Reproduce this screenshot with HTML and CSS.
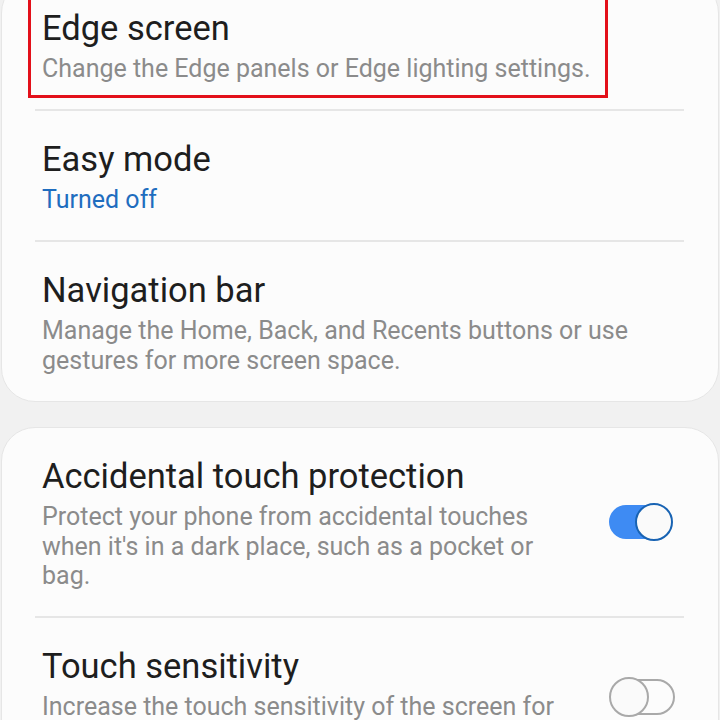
FILE: index.html
```html
<!DOCTYPE html>
<html>
<head>
<meta charset="utf-8">
<link rel="stylesheet" href="styles.css">
</head>
<body>
<div class="page">
  <section class="card card-first">
    <div class="row highlighted">
      <div class="text">
        <div class="title">Edge screen</div>
        <div class="desc">Change the Edge panels or Edge lighting settings.</div>
      </div>
    </div>
    <div class="divider"></div>
    <div class="row">
      <div class="text">
        <div class="title">Easy mode</div>
        <div class="desc status">Turned off</div>
      </div>
    </div>
    <div class="divider"></div>
    <div class="row">
      <div class="text">
        <div class="title">Navigation bar</div>
        <div class="desc">Manage the Home, Back, and Recents buttons or use<br>gestures for more screen space.</div>
      </div>
    </div>
  </section>
  <section class="card">
    <div class="row">
      <div class="text">
        <div class="title">Accidental touch protection</div>
        <div class="desc">Protect your phone from accidental touches<br>when it's in a dark place, such as a pocket or<br>bag.</div>
      </div>
      <div class="switch on"><span class="thumb"></span></div>
    </div>
    <div class="divider"></div>
    <div class="row">
      <div class="text">
        <div class="title">Touch sensitivity</div>
        <div class="desc">Increase the touch sensitivity of the screen for<br>use with screen protectors.</div>
      </div>
      <div class="switch off"><span class="thumb"></span></div>
    </div>
  </section>
</div>
</body>
</html>
```
FILE: styles.css
```css
html, body {
  margin: 0;
  padding: 0;
  background: #f1f1f1;
  font-family: Roboto, "Noto Sans", sans-serif;
  height: 720px;
  overflow: hidden;
}
.page {
  margin-top: -21px;
  padding: 0 1px;
  display: flex;
  flex-direction: column;
  gap: 25.5px;
}
.card {
  background: #fcfcfc;
  border: 1px solid #e6e6e6;
  border-radius: 34px;
}
.row {
  display: flex;
  align-items: center;
  padding: 31px 45px 25.5px 40px;
  position: relative;
}
.highlighted::after {
  content: "";
  position: absolute;
  left: 26px;
  right: 110px;
  top: 0;
  bottom: 11px;
  border: 3px solid #e3101a;
}
.text {
  flex: 1;
  white-space: nowrap;
}
.title {
  font-size: 34.5px;
  line-height: 34px;
  color: #1e1e1e;
  margin-bottom: 9px;
}
.desc {
  font-size: 25px;
  line-height: 29.5px;
  color: #8b8b8b;
}
.status {
  color: #1f6dbf;
}
.divider {
  height: 2px;
  background: #e6e6e6;
  margin: 0 34px 0 33px;
}
.switch {
  position: relative;
  width: 64px;
  height: 38px;
  flex: none;
  margin-bottom: 6px;
}
.switch.on::before {
  content: "";
  position: absolute;
  left: 0;
  top: 2px;
  width: 56px;
  height: 34px;
  border-radius: 17px;
  background: #3e8bf3;
}
.switch.off::before {
  content: "";
  position: absolute;
  left: 2px;
  top: 1px;
  width: 60px;
  height: 32px;
  border-radius: 18px;
  border: 2px solid #a9a9a9;
}
.thumb {
  position: absolute;
  top: 0;
  width: 34px;
  height: 34px;
  border-radius: 50%;
  background: #fafafa;
}
.switch.on .thumb {
  right: 0;
  border: 2px solid #1863b3;
}
.switch.off .thumb {
  left: 0;
  top: -1px;
  width: 36px;
  height: 36px;
  border: 2px solid #a9a9a9;
}
```
